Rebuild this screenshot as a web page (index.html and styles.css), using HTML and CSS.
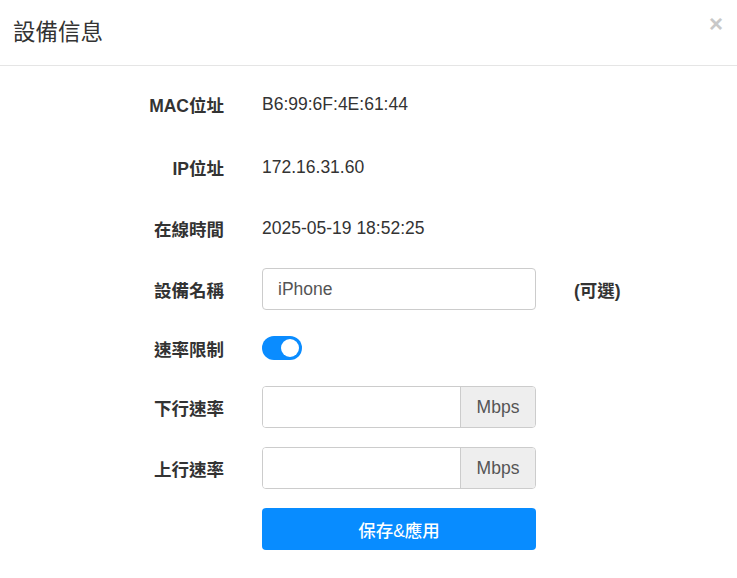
FILE: index.html
```html
<!DOCTYPE html>
<html lang="zh-Hant">
<head>
    <meta charset="UTF-8" />
    <meta name="viewport" content="width=device-width, initial-scale=1.0"/>
    <title>設備信息</title>
    <link rel="stylesheet" href="styles.css">
</head>
<body>

    <div class="modal">
        <div class="modal-header">
            <h4 class="modal-title">設備信息</h4>
            <span class="close">&times;</span>
        </div>

        <form class="device-form">
            <div class="form-row first">
                <label class="row-label">MAC位址</label>
                <div class="row-value">B6:99:6F:4E:61:44</div>
            </div>

            <div class="form-row">
                <label class="row-label">IP位址</label>
                <div class="row-value">172.16.31.60</div>
            </div>

            <div class="form-row">
                <label class="row-label">在線時間</label>
                <div class="row-value">2025-05-19 18:52:25</div>
            </div>

            <div class="form-row">
                <label class="row-label" for="devname">設備名稱</label>
                <input class="text-input" type="text" id="devname" value="iPhone" />
                <span class="hint">(可選)</span>
            </div>

            <div class="form-row toggle-row">
                <label class="row-label">速率限制</label>
                <span class="switch"><span class="knob"></span></span>
            </div>

            <div class="form-row">
                <label class="row-label" for="down">下行速率</label>
                <div class="input-group">
                    <input type="text" id="down" />
                    <span class="addon">Mbps</span>
                </div>
            </div>

            <div class="form-row">
                <label class="row-label" for="up">上行速率</label>
                <div class="input-group">
                    <input type="text" id="up" />
                    <span class="addon">Mbps</span>
                </div>
            </div>

            <div class="form-row">
                <span class="row-label"></span>
                <button type="button" class="btn-save">保存&amp;應用</button>
            </div>
        </form>
    </div>

</body>
</html>
```

FILE: styles.css
```css
body {
    margin: 0;
    background: #fff;
    color: #333;
    font-family: "Liberation Sans", Arial, "Noto Sans CJK TC", sans-serif;
    font-size: 17.5px;
}

.modal-header {
    height: 66px;
    border-bottom: 1px solid #e5e5e5;
    display: flex;
    align-items: center;
    justify-content: space-between;
    padding: 0 14px 6px 13px;
    box-sizing: border-box;
}

.modal-title {
    margin: 0;
    font-size: 22.5px;
    font-weight: normal;
    color: #333;
}

.close {
    font-size: 24px;
    font-weight: bold;
    color: #c8c8c8;
    line-height: 1;
    margin-bottom: 12px;
}

.device-form {
    display: flex;
    flex-direction: column;
    gap: 19px;
    padding-top: 17px;
}

.form-row {
    display: flex;
    align-items: center;
    height: 42px;
}

.form-row.first {
    margin-bottom: 2px;
}

.form-row.toggle-row {
    height: 38px;
}

.row-label {
    width: 224px;
    margin-right: 38px;
    text-align: right;
    font-weight: bold;
    color: #333;
    flex-shrink: 0;
}

.row-value {
    color: #333;
    padding-top: 1px;
}

.text-input,
.input-group {
    width: 274px;
    height: 42px;
    box-sizing: border-box;
    border: 1px solid #ccc;
    border-radius: 4px;
    font-family: inherit;
    font-size: 17.5px;
}

.text-input {
    padding: 0 15px;
    color: #555;
}

.hint {
    margin-left: 38px;
    font-weight: bold;
}

.switch {
    width: 40px;
    height: 24px;
    border-radius: 12px;
    background: #0a8cff;
    position: relative;
    display: inline-block;
}

.switch .knob {
    position: absolute;
    right: 3px;
    top: 3px;
    width: 18px;
    height: 18px;
    border-radius: 50%;
    background: #fff;
}

.input-group {
    display: flex;
    overflow: hidden;
}

.input-group input {
    flex: 1;
    min-width: 0;
    border: none;
    outline: none;
    padding: 0 12px;
    font-family: inherit;
    font-size: 17.5px;
}

.input-group .addon {
    width: 74px;
    background: #eee;
    border-left: 1px solid #ccc;
    display: flex;
    align-items: center;
    justify-content: center;
    color: #555;
}

.btn-save {
    width: 274px;
    height: 42px;
    border: none;
    border-radius: 4px;
    background: #088cff;
    color: #fff;
    font-family: inherit;
    font-size: 17.5px;
    font-weight: 500;
    cursor: pointer;
}
```
